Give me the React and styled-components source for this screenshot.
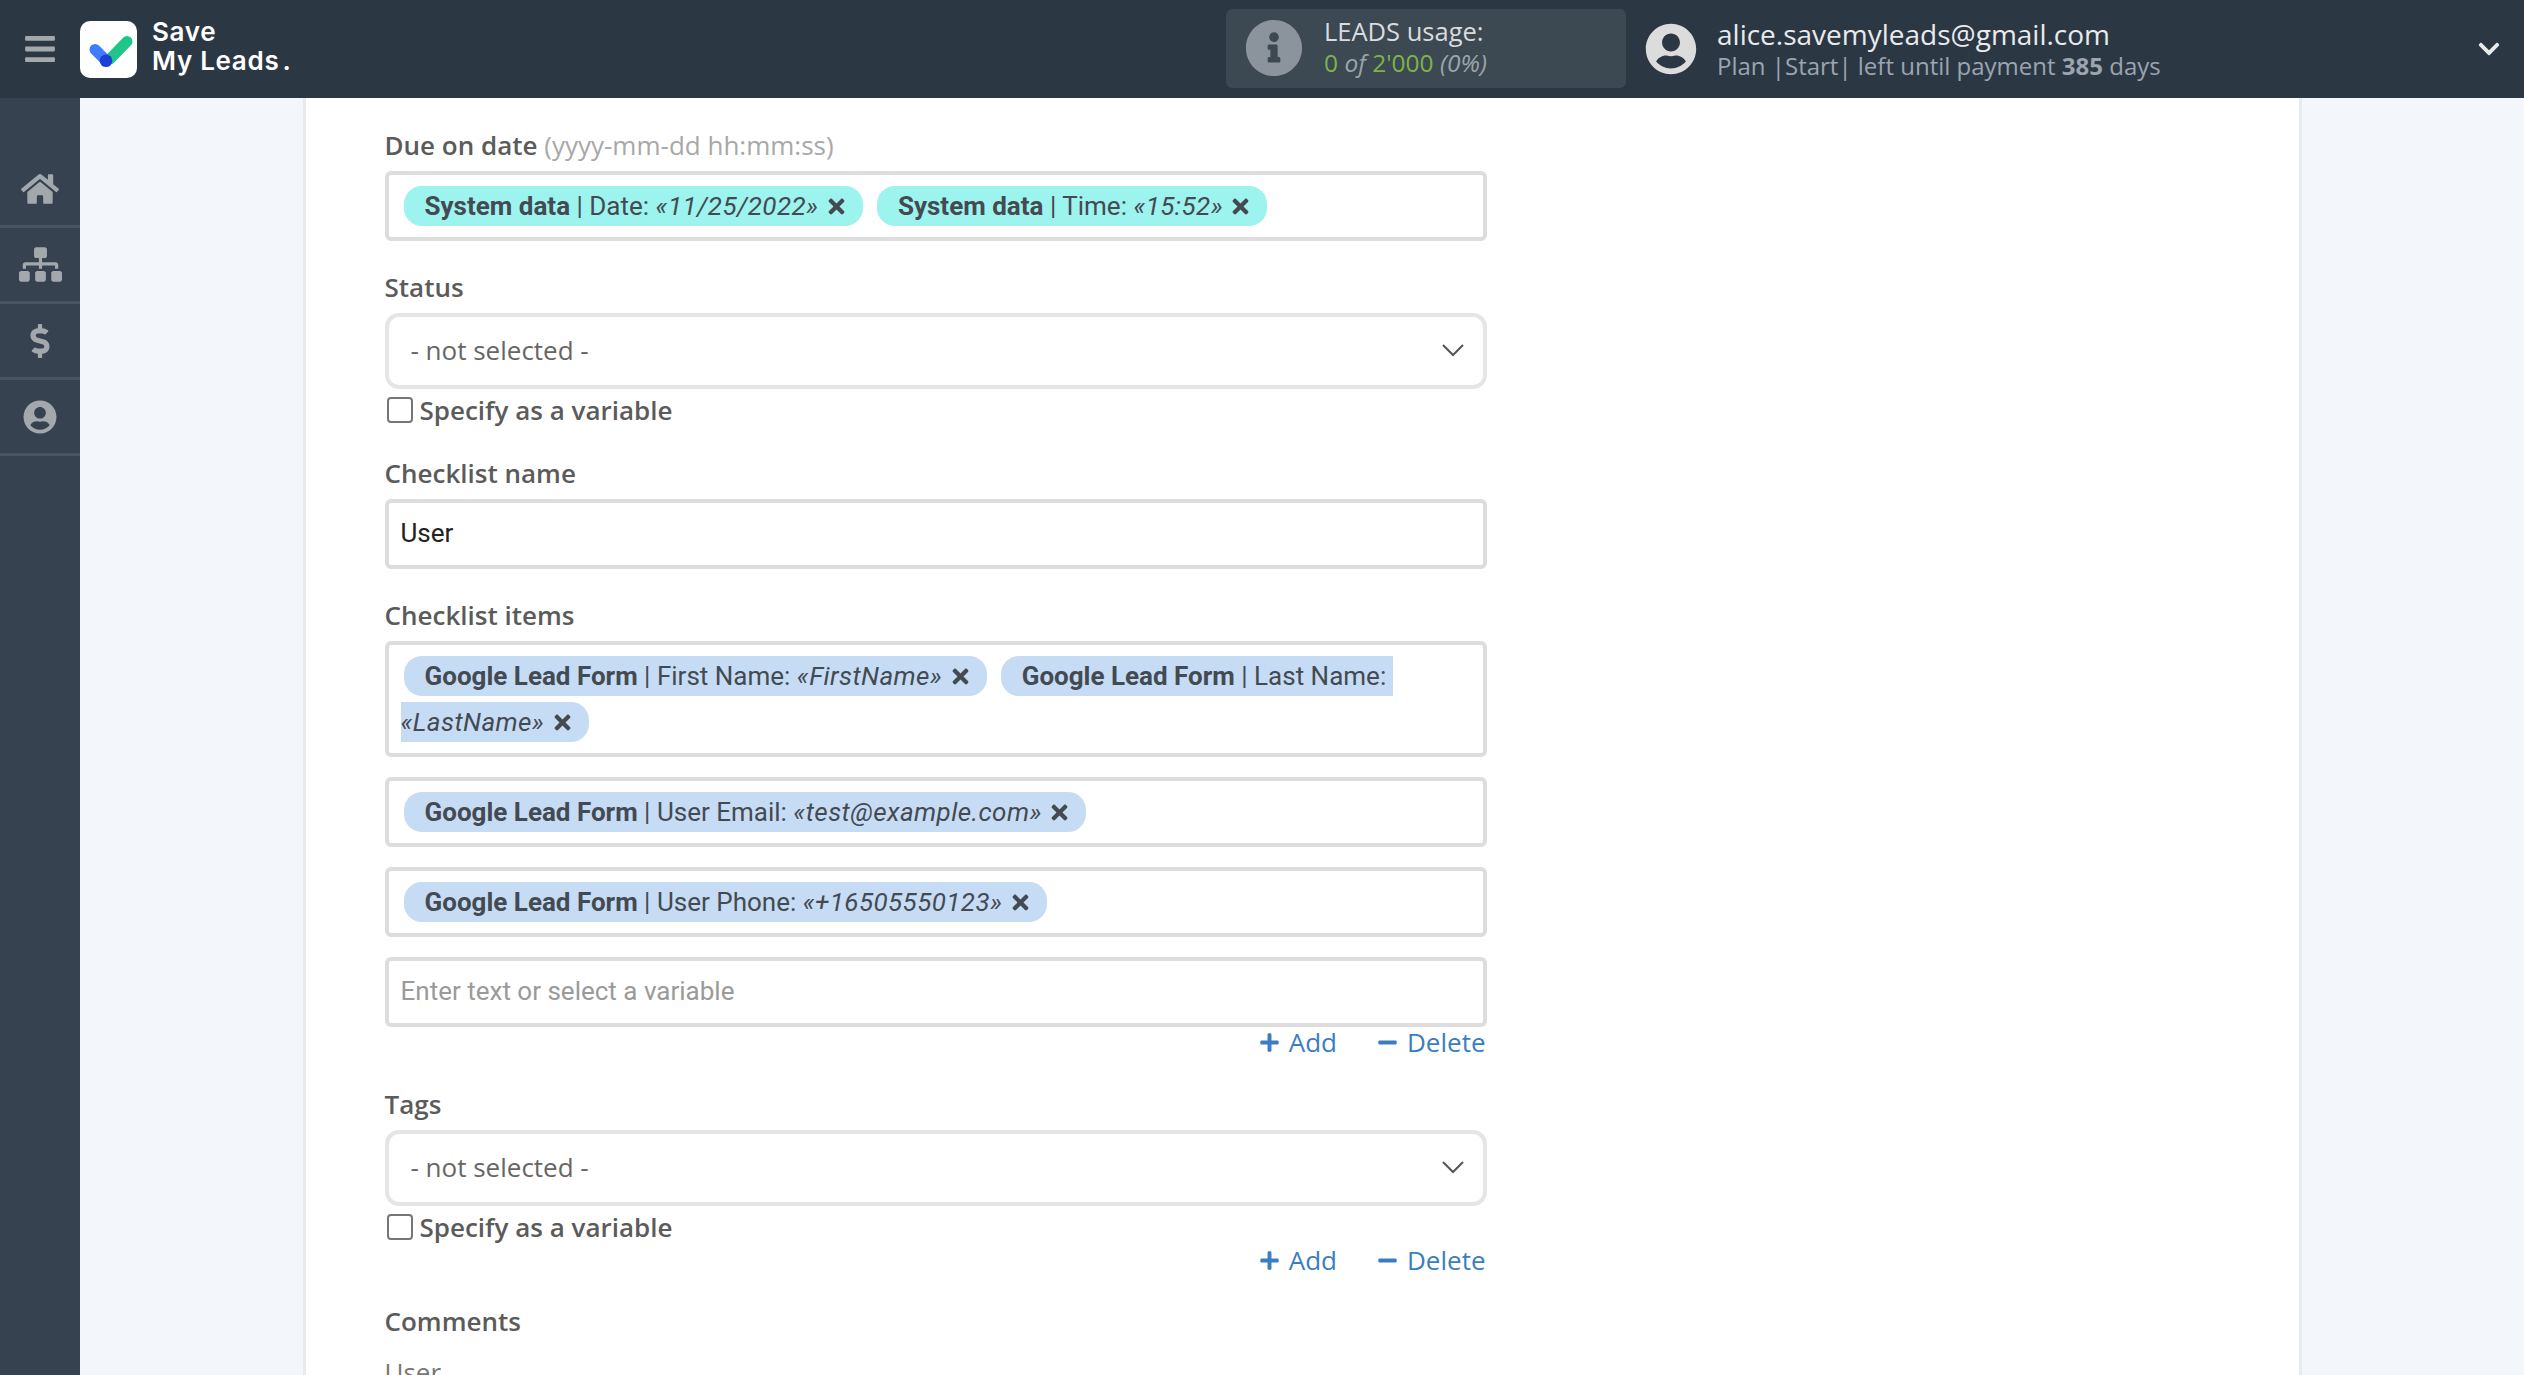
import React from "react";
import styled, {createGlobalStyle} from "styled-components";
import {FaBars, FaHome, FaSitemap, FaDollarSign, FaUserCircle, FaInfoCircle, FaChevronDown, FaPlus, FaMinus, FaTimes} from "react-icons/fa";

const GlobalStyle = createGlobalStyle`
html, body {
    margin: 0;
    padding: 0;
    height: 100%;
    background: #f3f7fc;
}
#root {
    height: 100%;
}
* {
    box-sizing: border-box;
}
`;

const Page = styled.div`
height: 100vh;
display: flex;
flex-direction: column;
overflow: hidden;
font-family: "Open Sans", "Liberation Sans", sans-serif;
`;

const Header = styled.header`
flex: 0 0 98px;
display: flex;
align-items: center;
background: #2c3744;
color: #fff;
`;

const Burger = styled.div`
width: 80px;
display: flex;
justify-content: center;
color: #a3a8ad;
font-size: 34px;
line-height: 0;
`;

const Logo = styled.div`
display: flex;
align-items: center;
gap: 15px;
flex: 1;
`;

const LogoText = styled.div`
font-family: Inter, "Open Sans", sans-serif;
font-weight: 600;
font-size: 26px;
line-height: 29px;
letter-spacing: 0.7px;
padding-bottom: 7px;
span {
    margin-left: 3px;
}
`;

const Usage = styled.div`
width: 400px;
height: 79px;
margin: 0 19px 2px 0;
padding: 0 0 0 19px;
display: flex;
align-items: center;
gap: 21px;
background: #3c4852;
border-radius: 6px;
`;

const UsageIcon = styled.div`
color: #8b949c;
font-size: 58px;
line-height: 0;
`;

const UsageText = styled.div`
padding-bottom: 3px;
`;

const UsageTitle = styled.div`
font-size: 25.5px;
line-height: 32px;
color: #d8dcdf;
`;

const UsageCount = styled.div`
font-size: 24.5px;
line-height: 32px;
font-style: italic;
color: #9aa5ad;
b {
    font-weight: 400;
    font-style: normal;
    color: #7fb24a;
}
`;

const Account = styled.div`
width: 879px;
display: flex;
align-items: center;
gap: 20px;
position: relative;
`;

const AccountIcon = styled.div`
color: #dcdcdc;
font-size: 52px;
line-height: 0;
`;

const AccountText = styled.div`
padding-bottom: 3px;
`;

const Email = styled.div`
font-size: 28px;
line-height: 36px;
color: #e8eaec;
`;

const Plan = styled.div`
font-size: 24px;
line-height: 27px;
color: #9aa5b0;
b {
    font-weight: 700;
}
`;

const AccountArrow = styled.div`
position: absolute;
right: 23px;
top: 50%;
transform: translateY(-50%);
color: #e8eaec;
font-size: 24px;
line-height: 0;
`;

const Body = styled.div`
flex: 1;
min-height: 0;
display: flex;
`;

const Sidebar = styled.nav`
flex: 0 0 80px;
background: #36424f;
padding-top: 54px;
`;

const SideItem = styled.div`
height: 76px;
display: flex;
align-items: center;
justify-content: center;
border-bottom: 3px solid #485460;
color: #a3a8ad;
font-size: ${p => p.$size}px;
`;

const Main = styled.main`
flex: 1;
min-width: 0;
display: flex;
justify-content: center;
`;

const Card = styled.div`
width: 1999px;
background: #fff;
border-left: 3px solid #e8ebee;
border-right: 3px solid #e8ebee;
padding: 30px 0 0 79px;
overflow: hidden;
`;

const Form = styled.div`
width: 1102px;
`;

const Field = styled.div`
margin-bottom: ${p => p.$after ?? 29}px;
`;

const Label = styled.div`
font-size: 26px;
line-height: 34px;
font-weight: 600;
color: #5b5b5b;
margin-bottom: 9px;
span {
    font-weight: 400;
    color: #a8a8a8;
}
`;

const TagBox = styled.div`
border: 4px solid #dddddd;
border-radius: 6px;
padding: 8px 12px;
min-height: 70px;
font-family: Roboto, "Liberation Sans", sans-serif;
font-size: 26px;
line-height: 46px;
color: #444a52;
margin-bottom: ${p => p.$after ?? 0}px;
`;

const Chip = styled.span`
background: ${p => p.$system ? "#9df3ed" : "#c6dcf5"};
border-radius: 18px;
padding: 5px 15px 5px 21px;
margin: 0 11px 0 3px;
b {
    font-weight: 700;
}
i {
    letter-spacing: 0.4px;
}
svg {
    font-size: 23px;
    vertical-align: 5px;
    margin-block: -8px;
}
`;

const Select = styled.div`
height: 76px;
border: 4px solid #e5e5e7;
border-radius: 14px;
padding: 0 18px 2px 22px;
display: flex;
align-items: center;
justify-content: space-between;
font-size: 26px;
color: #666;
`;

const CheckRow = styled.label`
display: flex;
align-items: center;
gap: 7px;
margin-top: 6px;
padding-left: 2px;
height: 30px;
font-size: 26px;
font-weight: 600;
color: #5b5b5b;
`;

const Check = styled.input`
appearance: none;
margin: 0;
width: 26px;
height: 26px;
background: #fff;
border: 2px solid #767676;
border-radius: 4px;
`;

const TextInput = styled.input`
display: block;
width: 100%;
height: 70px;
border: 4px solid #dddddd;
border-radius: 6px;
padding: 0 12px 2px;
outline: none;
font-family: Roboto, "Liberation Sans", sans-serif;
font-size: 26px;
color: #222;
&::placeholder {
    color: #9a9a9a;
}
`;

const Actions = styled.div`
display: flex;
justify-content: flex-end;
gap: 40px;
height: 30px;
padding-right: 1px;
margin-top: ${p => p.$top}px;
`;

const Action = styled.a`
display: flex;
align-items: center;
gap: 9px;
font-size: 26px;
color: #3a7ebf;
svg {
    font-size: 21px;
}
`;

const CommentText = styled.div`
margin-top: 17px;
font-size: 26px;
line-height: 34px;
color: #777;
`;

function LogoMark() {
    return (
        <svg width="57" height="57" viewBox="0 0 57 57">
            <rect width="57" height="57" rx="10" fill="#fff"/>
            <line x1="30" y1="38" x2="47" y2="20.5" stroke="#20c58a" strokeWidth="11" strokeLinecap="round"/>
            <line x1="15" y1="28.5" x2="26" y2="39.5" stroke="#3f7cfb" strokeWidth="11" strokeLinecap="round"/>
            <circle cx="26" cy="39.7" r="6.3" fill="#1c3fd6"/>
        </svg>
    );
}

function SelectArrow() {
    return (
        <svg width="24" height="14" viewBox="0 0 24 14">
            <polyline points="2,2 12,12 22,2" fill="none" stroke="#555" strokeWidth="2"/>
        </svg>
    );
}

function TagChip({system, source, name, value}) {
    return (
        <Chip $system={system}>
            <b>{source}</b> | {name}:&nbsp;<wbr/><i>«{value}»</i> <FaTimes/>
        </Chip>
    );
}

function AddDelete({top}) {
    return (
        <Actions $top={top}>
            <Action><FaPlus/>Add</Action>
            <Action><FaMinus/>Delete</Action>
        </Actions>
    );
}

export default function App() {
    return (
        <Page>
            <GlobalStyle/>
            <Header>
                <Burger><FaBars/></Burger>
                <Logo>
                    <LogoMark/>
                    <LogoText>Save<br/>My Leads<span>.</span></LogoText>
                </Logo>
                <Usage>
                    <UsageIcon><FaInfoCircle/></UsageIcon>
                    <UsageText>
                        <UsageTitle>LEADS usage:</UsageTitle>
                        <UsageCount><b>0</b> of <b>2'000</b> (0%)</UsageCount>
                    </UsageText>
                </Usage>
                <Account>
                    <AccountIcon><FaUserCircle/></AccountIcon>
                    <AccountText>
                        <Email>alice.savemyleads@gmail.com</Email>
                        <Plan>Plan |Start| left until payment <b>385</b> days</Plan>
                    </AccountText>
                    <AccountArrow><FaChevronDown/></AccountArrow>
                </Account>
            </Header>
            <Body>
                <Sidebar>
                    <SideItem $size={38}><FaHome/></SideItem>
                    <SideItem $size={43}><FaSitemap/></SideItem>
                    <SideItem $size={34}><FaDollarSign/></SideItem>
                    <SideItem $size={34}><FaUserCircle/></SideItem>
                </Sidebar>
                <Main>
                    <Card>
                        <Form>
                            <Field>
                                <Label>Due on date <span>(yyyy-mm-dd hh:mm:ss)</span></Label>
                                <TagBox>
                                    <TagChip system source="System data" name="Date" value="11/25/2022"/>
                                    <TagChip system source="System data" name="Time" value="15:52"/>
                                </TagBox>
                            </Field>
                            <Field $after={31}>
                                <Label>Status</Label>
                                <Select>- not selected -<SelectArrow/></Select>
                                <CheckRow><Check type="checkbox"/>Specify as a variable</CheckRow>
                            </Field>
                            <Field>
                                <Label>Checklist name</Label>
                                <TextInput readOnly value="User"/>
                            </Field>
                            <Field $after={30}>
                                <Label>Checklist items</Label>
                                <TagBox $after={20}>
                                    <TagChip source="Google Lead Form" name="First Name" value="FirstName"/>
                                    <TagChip source="Google Lead Form" name="Last Name" value="LastName"/>
                                </TagBox>
                                <TagBox $after={20}>
                                    <TagChip source="Google Lead Form" name="User Email" value="test@example.com"/>
                                </TagBox>
                                <TagBox $after={20}>
                                    <TagChip source="Google Lead Form" name="User Phone" value="+16505550123"/>
                                </TagBox>
                                <TextInput readOnly placeholder="Enter text or select a variable"/>
                                <AddDelete top={0}/>
                            </Field>
                            <Field>
                                <Label>Tags</Label>
                                <Select>- not selected -<SelectArrow/></Select>
                                <CheckRow><Check type="checkbox"/>Specify as a variable</CheckRow>
                                <AddDelete top={3}/>
                            </Field>
                            <Field>
                                <Label>Comments</Label>
                                <CommentText>User</CommentText>
                            </Field>
                        </Form>
                    </Card>
                </Main>
            </Body>
        </Page>
    );
}
